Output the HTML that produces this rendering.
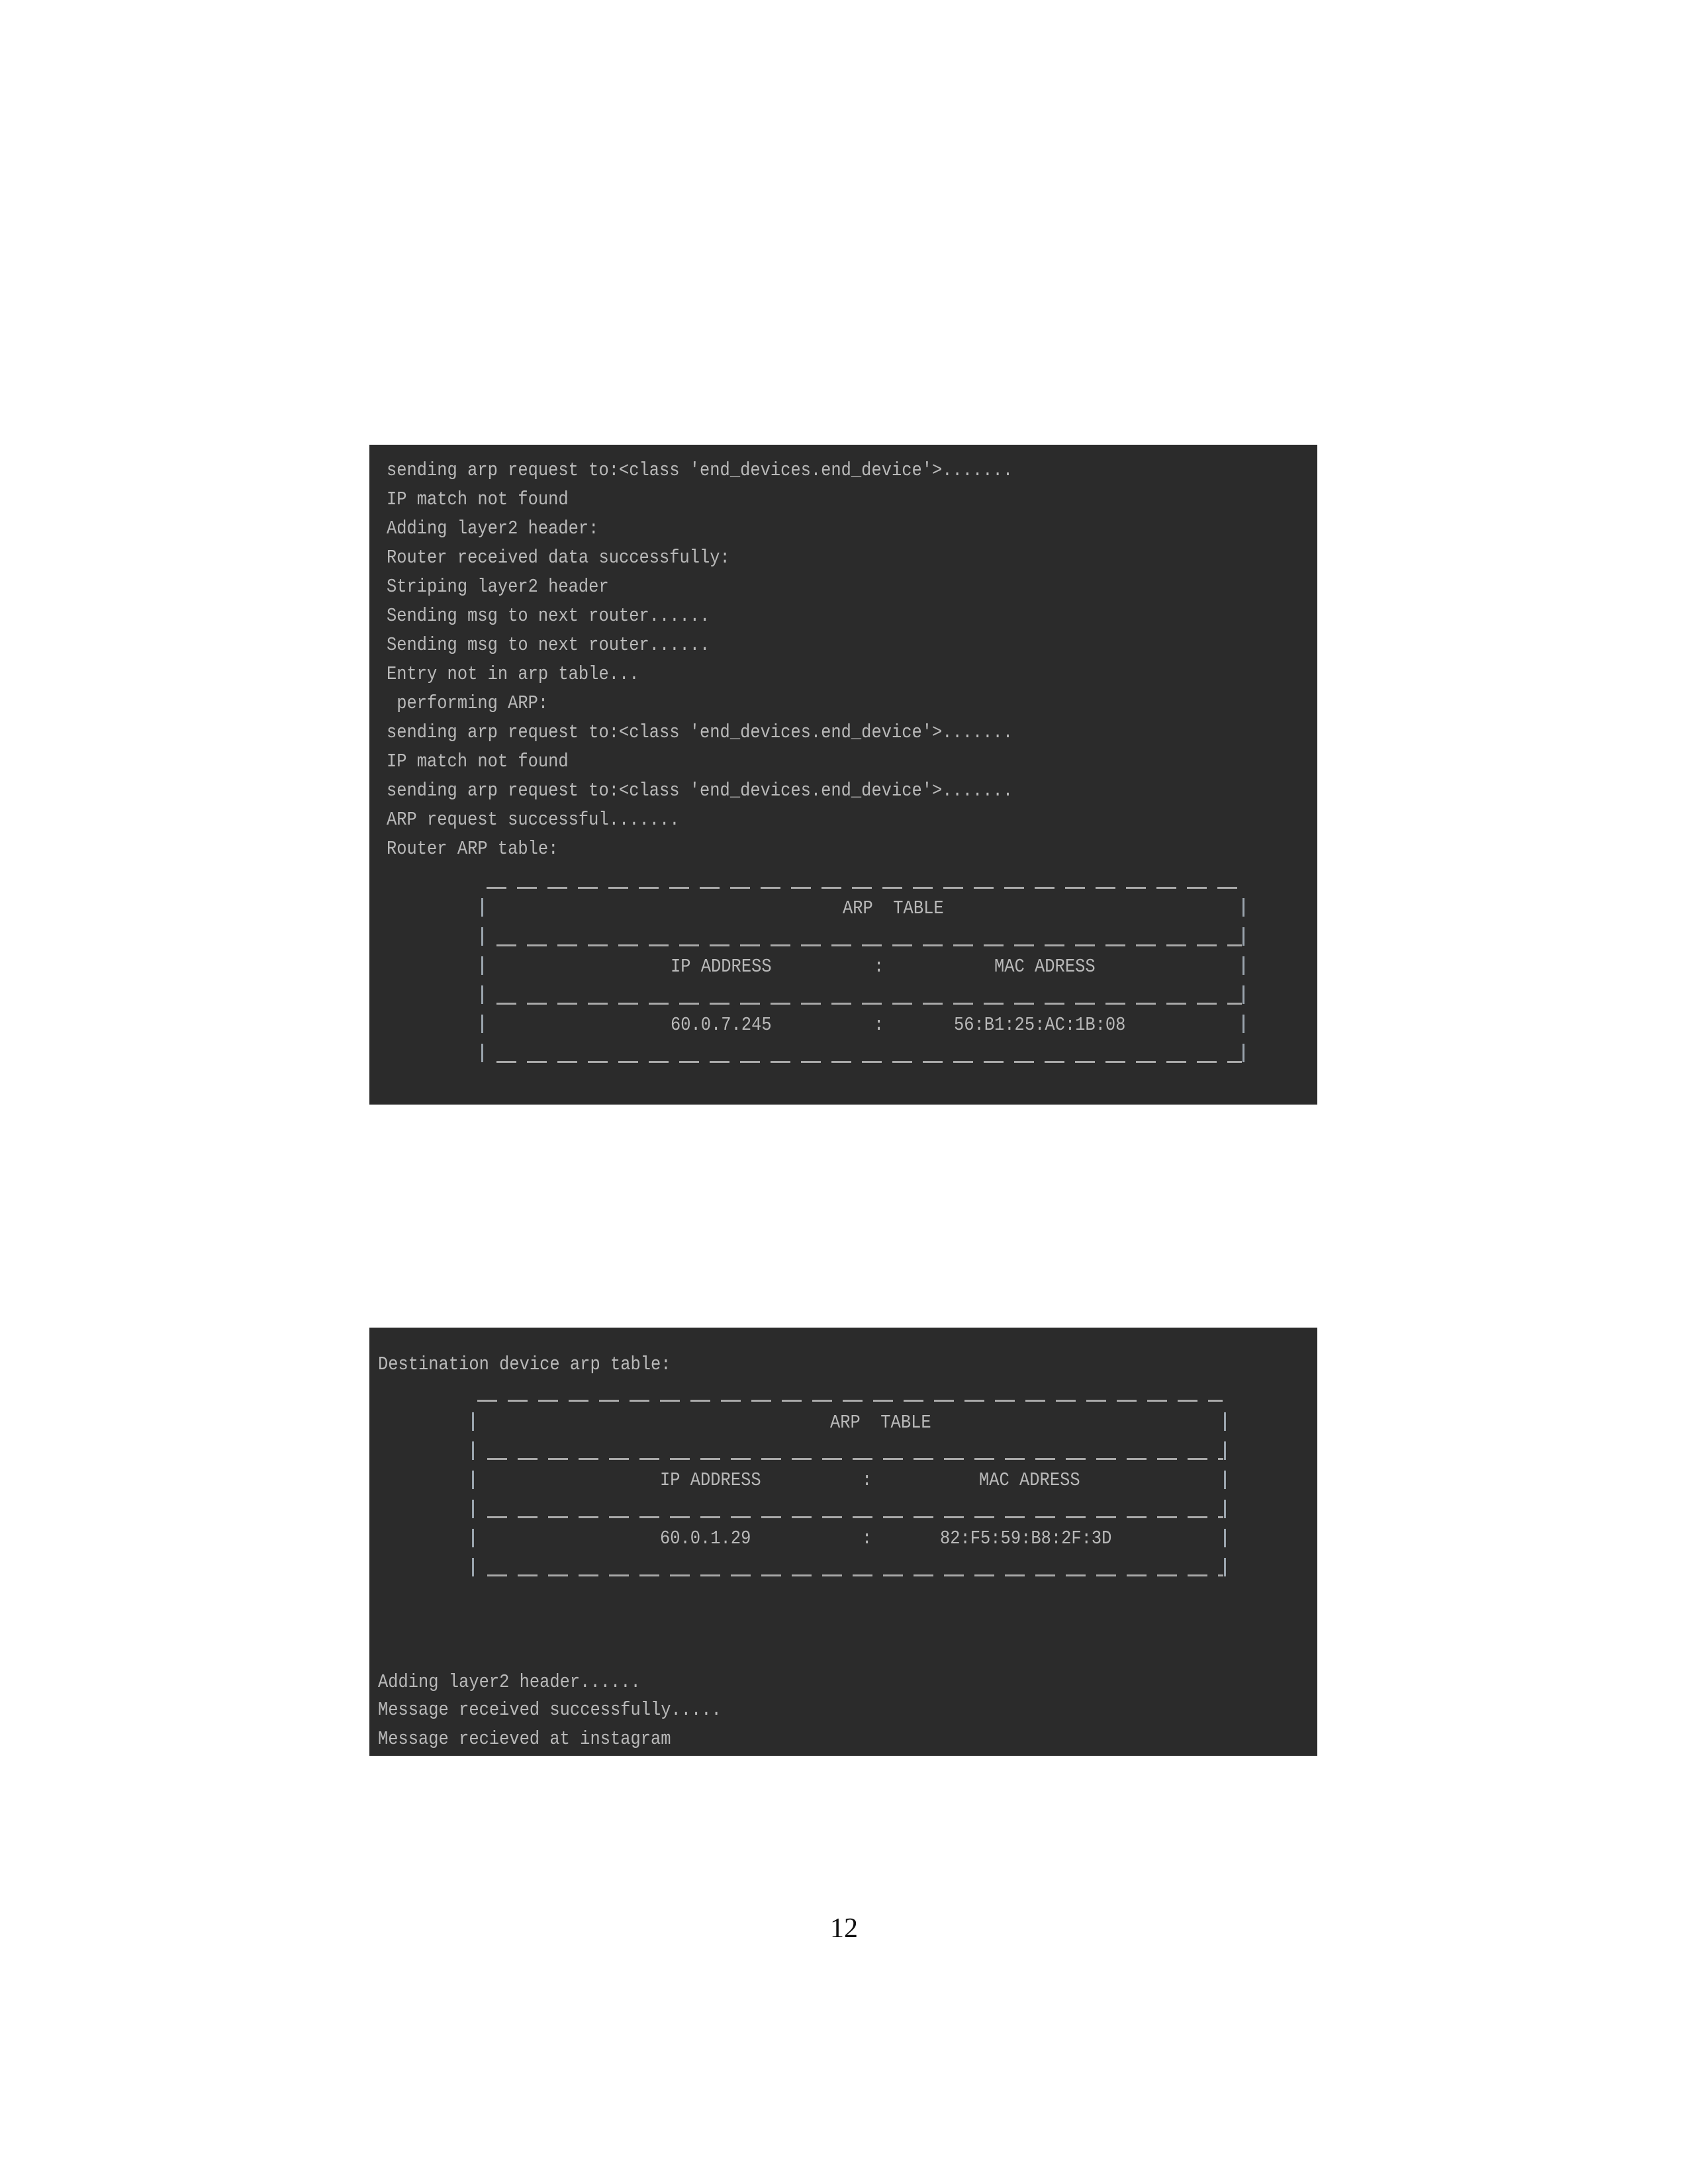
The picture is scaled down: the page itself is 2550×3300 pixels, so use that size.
<!DOCTYPE html>
<html><head><meta charset="utf-8"><style>
html,body{margin:0;padding:0;background:#fff}
body{width:2550px;height:3300px;position:relative;overflow:hidden}
.box{position:absolute;background:#2b2b2b}
.t{position:absolute;font-family:"Liberation Mono","DejaVu Sans Mono",monospace;font-size:26px;line-height:34px;color:#b9b9b9;white-space:pre;transform:scale(0.978,1.12);transform-origin:left center}
.d{position:absolute;height:3px;background:repeating-linear-gradient(to right,#a9a9a9 0 30px,transparent 30px 46px)}
.b{position:absolute;width:3px;height:28px;background:#9aa4ad}
.pn{position:absolute;left:1254px;top:2890px;font-family:"Liberation Serif",serif;font-size:42px;color:#111}
</style></head><body>
<div class="box" style="left:558px;top:672px;width:1432px;height:997px"></div>
<div class="box" style="left:558px;top:2006px;width:1432px;height:647px"></div>

<div class="t" style="left:584px;top:693px">sending arp request to:&lt;class 'end_devices.end_device'&gt;.......</div>
<div class="t" style="left:584px;top:737px">IP match not found</div>
<div class="t" style="left:584px;top:781px">Adding layer2 header:</div>
<div class="t" style="left:584px;top:825px">Router received data successfully:</div>
<div class="t" style="left:584px;top:869px">Striping layer2 header</div>
<div class="t" style="left:584px;top:913px">Sending msg to next router......</div>
<div class="t" style="left:584px;top:957px">Sending msg to next router......</div>
<div class="t" style="left:584px;top:1001px">Entry not in arp table...</div>
<div class="t" style="left:584px;top:1045px"> performing ARP:</div>
<div class="t" style="left:584px;top:1089px">sending arp request to:&lt;class 'end_devices.end_device'&gt;.......</div>
<div class="t" style="left:584px;top:1133px">IP match not found</div>
<div class="t" style="left:584px;top:1177px">sending arp request to:&lt;class 'end_devices.end_device'&gt;.......</div>
<div class="t" style="left:584px;top:1221px">ARP request successful.......</div>
<div class="t" style="left:584px;top:1265px">Router ARP table:</div>

<div class="d" style="left:735px;top:1340px;width:1140px"></div>
<div class="d" style="left:750px;top:1427px;width:1126px"></div>
<div class="d" style="left:750px;top:1515px;width:1126px"></div>
<div class="d" style="left:750px;top:1603px;width:1126px"></div>
<div class="b" style="left:727px;top:1357px"></div><div class="b" style="left:727px;top:1401px"></div><div class="b" style="left:727px;top:1445px"></div><div class="b" style="left:727px;top:1489px"></div><div class="b" style="left:727px;top:1533px"></div><div class="b" style="left:727px;top:1577px"></div>
<div class="b" style="left:1877px;top:1357px"></div><div class="b" style="left:1877px;top:1401px"></div><div class="b" style="left:1877px;top:1445px"></div><div class="b" style="left:1877px;top:1489px"></div><div class="b" style="left:1877px;top:1533px"></div><div class="b" style="left:1877px;top:1577px"></div>
<div class="t" style="left:1273px;top:1355px">ARP  TABLE</div>
<div class="t" style="left:1013px;top:1443px">IP ADDRESS</div>
<div class="t" style="left:1320px;top:1443px">:</div>
<div class="t" style="left:1502px;top:1443px">MAC ADRESS</div>
<div class="t" style="left:1013px;top:1531px">60.0.7.245</div>
<div class="t" style="left:1320px;top:1531px">:</div>
<div class="t" style="left:1441px;top:1531px">56:B1:25:AC:1B:08</div>

<div class="t" style="left:571px;top:2044px">Destination device arp table:</div>
<div class="d" style="left:721px;top:2115px;width:1126px"></div>
<div class="d" style="left:736px;top:2203px;width:1112px"></div>
<div class="d" style="left:736px;top:2291px;width:1112px"></div>
<div class="d" style="left:736px;top:2379px;width:1112px"></div>
<div class="b" style="left:713px;top:2134px"></div><div class="b" style="left:713px;top:2178px"></div><div class="b" style="left:713px;top:2222px"></div><div class="b" style="left:713px;top:2266px"></div><div class="b" style="left:713px;top:2310px"></div><div class="b" style="left:713px;top:2354px"></div>
<div class="b" style="left:1849px;top:2134px"></div><div class="b" style="left:1849px;top:2178px"></div><div class="b" style="left:1849px;top:2222px"></div><div class="b" style="left:1849px;top:2266px"></div><div class="b" style="left:1849px;top:2310px"></div><div class="b" style="left:1849px;top:2354px"></div>
<div class="t" style="left:1254px;top:2132px">ARP  TABLE</div>
<div class="t" style="left:997px;top:2219px">IP ADDRESS</div>
<div class="t" style="left:1302px;top:2219px">:</div>
<div class="t" style="left:1479px;top:2219px">MAC ADRESS</div>
<div class="t" style="left:997px;top:2307px">60.0.1.29</div>
<div class="t" style="left:1302px;top:2307px">:</div>
<div class="t" style="left:1420px;top:2307px">82:F5:59:B8:2F:3D</div>

<div class="t" style="left:571px;top:2524px">Adding layer2 header......</div>
<div class="t" style="left:571px;top:2566px">Message received successfully.....</div>
<div class="t" style="left:571px;top:2610px">Message recieved at instagram</div>

<div class="pn">12</div>
</body></html>
